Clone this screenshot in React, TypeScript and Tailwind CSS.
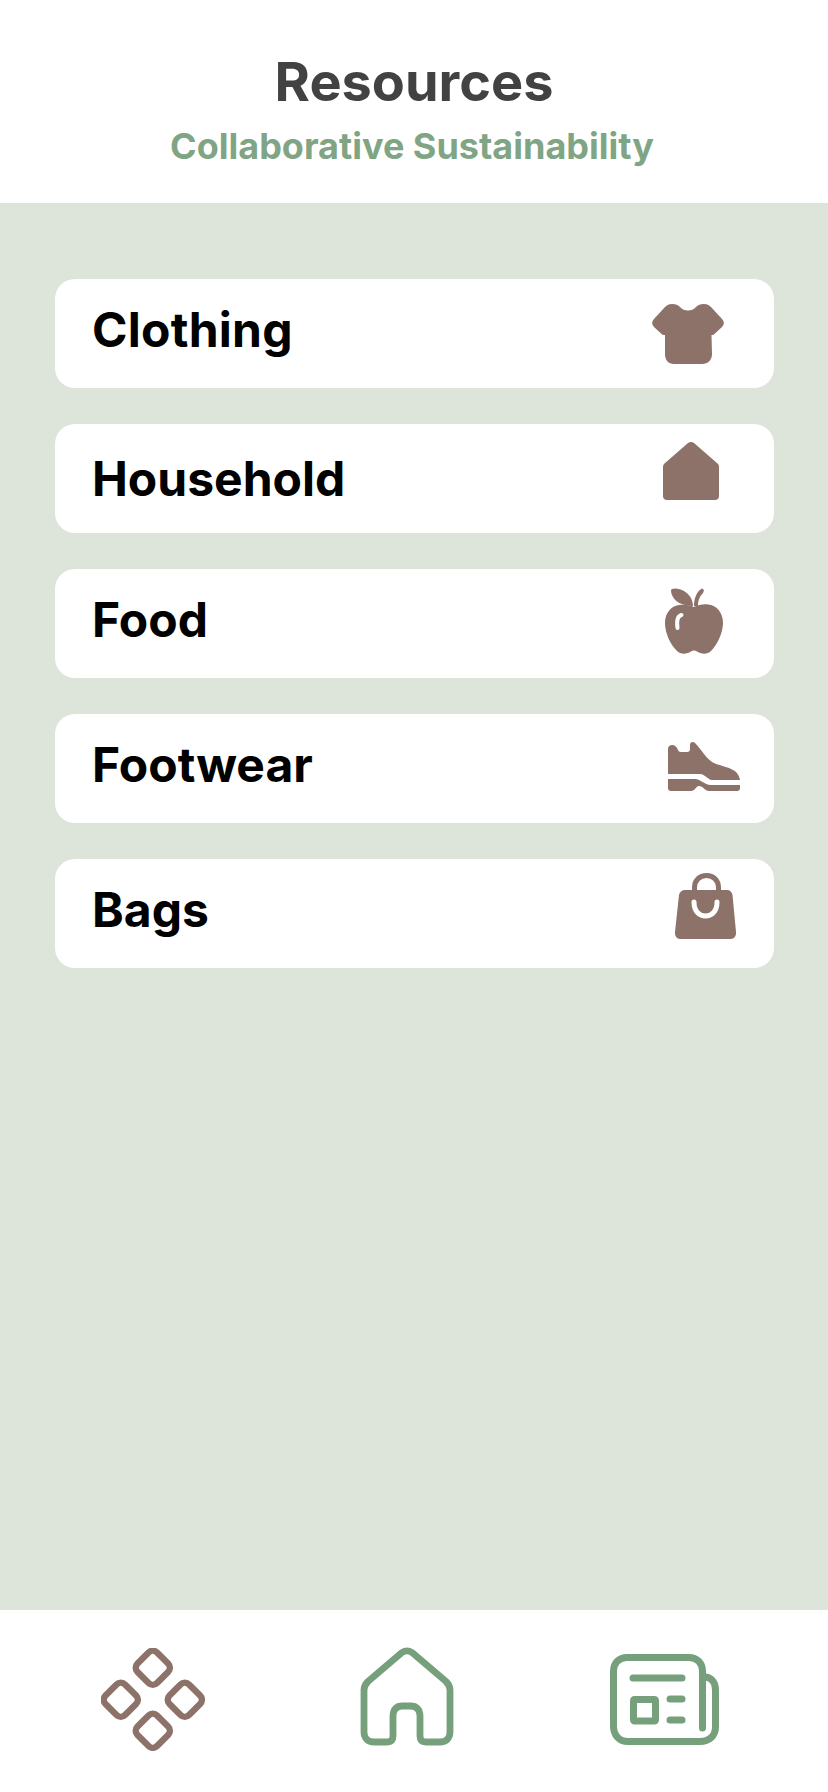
const categories = [
  { name: "Clothing", top: "pt-[15px] tracking-[0.25px]", icon: <ShirtIcon /> },
  { name: "Household", top: "pt-[19px]", icon: <HouseIcon /> },
  { name: "Food", top: "pt-[15px]", icon: <AppleIcon /> },
  { name: "Footwear", top: "pt-[15px]", icon: <ShoeIcon /> },
  { name: "Bags", top: "pt-[15px]", icon: <BagIcon /> },
];

function ShirtIcon() {
  return (
    <svg className="mt-[25px] mr-[50px] overflow-visible" width="72" height="60" viewBox="0 0 72 60" fill="#8c7269">
      <path d="M20 0C24 0 26 1 28 3C30 5.5 33 6.5 36 6.5C39 6.5 42 5.5 44 3C46 1 48 0 52 0C55 0 57 1 59 3L70 15C72.5 17.5 72.5 20.5 70 23L63 29.5C62 30.5 60.5 31 59.5 31L60 50C60 56 56 60 50 60H22C16 60 13 56 13 50V31C11.5 31 10 30.5 9 29.5L2 23C-.5 20.5-.5 17.5 2 15L13 3C15 1 17 0 20 0Z" />
    </svg>
  );
}

function HouseIcon() {
  return (
    <svg className="mt-[18px] mr-[55px] overflow-visible" width="56" height="58" viewBox="0 0 56 58" fill="#8c7269">
      <path d="M25 1C27-.3 29-.3 31 1L54.5 21.5C55.5 22.5 56 23.5 56 25V54C56 56.5 54.5 58 52 58H4C1.5 58 0 56.5 0 54V25C0 23.5.5 22.5 1.5 21.5Z" />
    </svg>
  );
}

function AppleIcon() {
  return (
    <svg className="mt-[19px] mr-[51px] overflow-visible" width="58" height="66" viewBox="0 0 58 66" fill="#8c7269">
      <path d="M29 19C33 17 38 16 43 16.5C52 17 58 25 58 35C58 45 52 57 46 63C42 67 36 66 32 63.5C30 62 28 62 26 63.5C22 66 16 67 12 63C6 57 0 46 0 35C0 25 6 18 14 17C19 16.5 25 17 29 19Z" />
      <path d="M7 1C13-1 22 3 26 10C27 13 28 15 28 18C20 18 11 15 8 9C6.5 6 5 2 7 1Z" />
      <path d="M29 18C29 11 31 5 36 1C38 0 40 2 38 5C35 8 33 12 33 18Z" />
      <path d="M16.5 27C12.5 28 11.5 33 12.5 40" fill="none" stroke="#fff" strokeWidth="4" strokeLinecap="round" />
    </svg>
  );
}

function ShoeIcon() {
  return (
    <svg className="mt-[28px] mr-[34px] overflow-visible" width="72" height="49" viewBox="0 0 72 49" fill="#8c7269">
      <path d="M0 7C0 4 2 3 4 3C7 3 9 5 10 8C11 10 12 10 14 10H19C21 10 22 9 22 7V3C22 0 25-1 27 1C30 4 33 8 36 12C39 16 43 20 48 22C54 24 60 25 65 28C69 30 71 33 72 38H44C40 38 37 32 32 32H0Z" />
      <path d="M0 37H27C33 37 36 43 43 43H72V46C72 48 71 49 69 49H41C37 49 35 44 31 44C29 44 28 46 27 47C26 48.5 24 49 22 49H3C1 49 0 48 0 46Z" />
    </svg>
  );
}

function BagIcon() {
  return (
    <svg className="mt-[14px] mr-[38px] overflow-visible" width="61" height="66" viewBox="0 0 61 66" fill="#8c7269">
      <path d="M19.5 18V14.5C19.5 7.5 24.5 2.5 31.5 2.5C38.5 2.5 43.5 7.5 43.5 14.5V18" fill="none" stroke="#8c7269" strokeWidth="5" />
      <path d="M10 17H52C55 17 57 19 57.5 22L61 59C61.5 63 59 66 56 66H5C2 66-.5 63 0 59L4 22C4.5 19 7 17 10 17Z" />
      <path d="M19 29C19 38 24 43 30.5 43C37 43 42 38 42 29" fill="none" stroke="#fff" strokeWidth="5" strokeLinecap="round" />
    </svg>
  );
}

function ElementsIcon() {
  return (
    <svg width="104" height="103" viewBox="0 0 104 103" fill="none" stroke="#8c7269" strokeWidth="6.5">
      <rect x="38" y="6" width="27.6" height="27.6" rx="6" transform="rotate(45 51.8 19.8)" />
      <rect x="6" y="38" width="27.6" height="27.6" rx="6" transform="rotate(45 19.8 51.8)" />
      <rect x="70" y="38" width="27.6" height="27.6" rx="6" transform="rotate(45 83.8 51.8)" />
      <rect x="38" y="69" width="27.6" height="27.6" rx="6" transform="rotate(45 51.8 82.8)" />
    </svg>
  );
}

function HomeIcon() {
  return (
    <svg className="overflow-visible" width="92" height="97" viewBox="0 0 92 97" fill="none" stroke="#76a07b" strokeWidth="6.8">
      <path d="M3 42C3 38 4.5 36 7 33.5L41 4.5C44 2.5 48 2.5 51 4.5L85 33.5C87.5 36 89 38 89 42V84C89 90 85 94 79 94H65C61 94 59 92 59 88V68C59 61 55 58 50 58H41C36 58 32 61 32 68V88C32 92 30 94 26 94H13C7 94 3 90 3 84Z" />
    </svg>
  );
}

function NewsIcon() {
  return (
    <svg className="mt-[6px] ml-[1px] overflow-visible" width="109" height="91" viewBox="0 0 109 91" fill="none" stroke="#76a07b" strokeWidth="7" strokeLinecap="round">
      <path d="M92.5 74V17C92.5 9 87 3.5 79 3.5H17C9 3.5 3.5 9 3.5 17V72C3.5 81 9 87.5 18 87.5H90C99 87.5 105.5 82 105.5 73V36C105.5 29 102 24 96 23" />
      <path d="M23 24H72" />
      <rect x="23.5" y="45.5" width="22" height="21.5" rx="1" />
      <path d="M60 45H72" />
      <path d="M60 66H72" />
    </svg>
  );
}

export default function App() {
  return (
    <div className="flex h-[1792px] w-[828px] flex-col bg-white font-['Inter',sans-serif]">
      {/* Header */}
      <header className="flex h-[203px] flex-col items-center pt-[48px]">
        <h1 className="text-[54px] leading-[68px] font-bold text-[#424242]">Resources</h1>
        <p className="mt-[8px] mr-[4px] text-[36px] leading-[44px] font-bold text-[#7fa585]">Collaborative Sustainability</p>
      </header>

      {/* Category list */}
      <main className="flex flex-1 flex-col gap-[36px] bg-[#dde4da] pt-[76px] pr-[54px] pl-[55px]">
        {categories.map((c) => (
          <div key={c.name} className="flex h-[109px] items-start justify-between rounded-[20px] bg-white pl-[37px]">
            <span className={`${c.top} text-[48px] leading-[72px] font-bold text-black`}>{c.name}</span>
            {c.icon}
          </div>
        ))}
      </main>

      {/* Bottom nav */}
      <nav className="flex h-[182px] items-start gap-[156px] pt-[38px] pl-[101px]">
        <ElementsIcon />
        <HomeIcon />
        <NewsIcon />
      </nav>
    </div>
  );
}
